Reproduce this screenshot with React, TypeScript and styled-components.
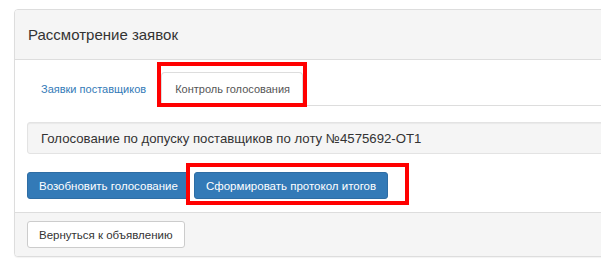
import React from "react";
import styled, { createGlobalStyle } from "styled-components";

const Global = createGlobalStyle`
  html, body { margin: 0; padding: 0; background: #fff; overflow: hidden; }
  body { font-family: "Liberation Sans", Arial, sans-serif; color: #333; }
  * { box-sizing: border-box; }
`;

const Page = styled.div`
  padding: 9px 0 0 14px;
  width: 601px;
  height: 266px;
  overflow: hidden;
`;

const Panel = styled.section`
  width: 660px;
  border: 1px solid #ddd;
  border-radius: 4px;
  background: #fff;
  box-shadow: 0 1px 1px rgba(0, 0, 0, 0.05);
`;

const Header = styled.header`
  height: 50px;
  display: flex;
  align-items: center;
  padding: 0 13px;
  background: #f5f5f5;
  border-bottom: 1px solid #ddd;
  border-radius: 3px 3px 0 0;
`;

const Title = styled.h3`
  margin: 0;
  font-size: 15px;
  font-weight: 400;
  color: #333;
`;

const Body = styled.div`
  padding: 12px 12px 13px 12px;
`;

const Tabs = styled.ul`
  list-style: none;
  margin: 0;
  padding: 0;
  display: flex;
  align-items: flex-end;
  border-bottom: 1px solid #ddd;
`;

const Tab = styled.li<{ $active?: boolean }>`
  position: relative;
  margin-right: 2px;
  margin-bottom: -1px;
  height: 34px;
  padding: 0 12px 0 13px;
  display: flex;
  align-items: center;
  font-size: 11px;
  border: 1px solid ${(p) => (p.$active ? "#ddd" : "transparent")};
  border-bottom-color: transparent;
  border-radius: 4px 4px 0 0;
  background: #fff;
  color: ${(p) => (p.$active ? "#555" : "#337ab7")};
`;

const Highlight = styled.span<{ $t: number; $r: number; $b: number; $l: number }>`
  position: absolute;
  top: ${(p) => p.$t}px;
  right: ${(p) => p.$r}px;
  bottom: ${(p) => p.$b}px;
  left: ${(p) => p.$l}px;
  border: 4px solid #ff0000;
  pointer-events: none;
`;

const Well = styled.div`
  margin-top: 16px;
  height: 32px;
  display: flex;
  align-items: center;
  padding: 0 13px;
  font-size: 13.2px;
  color: #333;
  background: #f5f5f5;
  border: 1px solid #e3e3e3;
  border-radius: 3px;
  box-shadow: inset 0 1px 1px rgba(0, 0, 0, 0.05);
`;

const Actions = styled.div`
  margin-top: 18px;
  display: flex;
  gap: 4px;
`;

const Button = styled.button<{ $primary?: boolean }>`
  position: relative;
  height: 27px;
  padding: 0 11px;
  font-family: "Liberation Sans", Arial, sans-serif;
  font-size: 11.5px;
  border-radius: 3px;
  border: 1px solid ${(p) => (p.$primary ? "#2e6da4" : "#ccc")};
  background: ${(p) => (p.$primary ? "#337ab7" : "#fff")};
  color: ${(p) => (p.$primary ? "#fff" : "#333")};
  cursor: pointer;
`;

const Footer = styled.footer`
  padding: 8px 12px;
  background: #f5f5f5;
  border-top: 1px solid #ddd;
  border-radius: 0 0 3px 3px;
`;

export default function App() {
  return (
    <>
      <Global />
      <Page>
        <Panel>
          <Header>
            <Title>Рассмотрение заявок</Title>
          </Header>
          <Body>
            <Tabs>
              <Tab>Заявки поставщиков</Tab>
              <Tab $active>
                Контроль голосования
                <Highlight $t={-11} $r={-5} $b={-2} $l={-5} />
              </Tab>
            </Tabs>
            <Well>Голосование по допуску поставщиков по лоту №4575692-ОТ1</Well>
            <Actions>
              <Button $primary>Возобновить голосование</Button>
              <Button $primary>
                Сформировать протокол итогов
                <Highlight $t={-10} $r={-22} $b={-7} $l={-9} />
              </Button>
            </Actions>
          </Body>
          <Footer>
            <Button>Вернуться к объявлению</Button>
          </Footer>
        </Panel>
      </Page>
    </>
  );
}
